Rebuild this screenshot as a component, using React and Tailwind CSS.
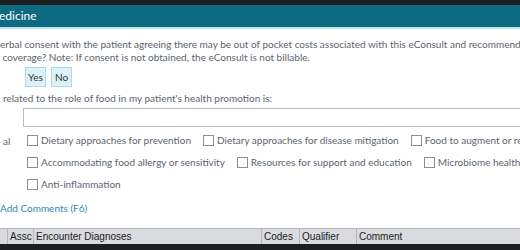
import React from 'react'

const ROWS = [
  ['Dietary approaches for prevention', 'Dietary approaches for disease mitigation', 'Food to augment or reduce medication'],
  ['Accommodating food allergy or sensitivity', 'Resources for support and education', 'Microbiome health'],
  ['Anti-inflammation'],
]

function Check({ label }) {
  return (
    <label className="flex items-center gap-[3px] shrink-0">
      <span className="w-[11px] h-[11px] border border-[#8a8f94] bg-white" />
      <span>{label}</span>
    </label>
  )
}

export default function App() {
  return (
    <div
      className="w-[520px] h-[250px] overflow-hidden bg-white flex flex-col text-[#5b6570] whitespace-nowrap"
      style={{ fontFamily: 'Lato, "Open Sans", sans-serif' }}
    >
      <div className="h-[5px] bg-[#1c1f22] shrink-0" />
      <div className="h-[22px] bg-[#0d6a80] text-white text-[12px] flex items-center shrink-0">
        <span className="-ml-[1px]">edicine</span>
      </div>
      <div className="h-[2px] bg-[#bfe6f1] shrink-0" />

      <div className="text-[10px] leading-[13px] pt-[9px] overflow-hidden">
        <div>erbal consent with the patient agreeing there may be out of pocket costs associated with this eConsult and recommendations</div>
        <div>&nbsp;coverage? Note: If consent is not obtained, the eConsult is not billable.</div>
      </div>

      <div className="flex gap-[5px] pl-[25px] pt-[3px] text-[10px] text-[#333]">
        <span className="h-[20px] w-[21px] flex items-center justify-center bg-[#dcf2f8] border border-[#a9dbe8]">Yes</span>
        <span className="h-[20px] w-[21px] flex items-center justify-center bg-[#dcf2f8] border border-[#a9dbe8]">No</span>
      </div>

      <div className="text-[10px] pl-[3px] pt-[5px] leading-[13px]">
        related to the role of food in my patient's health promotion is:
      </div>

      <div className="pl-[23px] pt-[3px]">
        <div className="h-[19px] w-[520px] border border-[#b8bcc0] bg-white" />
      </div>

      <div className="flex text-[10px] pt-[7px]">
        <div className="w-[27px] pl-[3px] shrink-0">al</div>
        <div className="flex flex-col gap-[9px]">
          {ROWS.map((row, i) => (
            <div key={i} className="flex gap-[12px] leading-[13px]">
              {row.map((l) => (
                <Check key={l} label={l} />
              ))}
            </div>
          ))}
        </div>
      </div>

      <div className="text-[10px] text-[#2f86b8] pt-[11px] leading-[13px]">Add Comments (F6)</div>

      <div className="flex-1" />

      <div
        className="flex h-[16px] bg-[#d9dbde] border-t border-[#b4b7ba] text-[10px] text-[#222] shrink-0"
        style={{ fontFamily: '"Liberation Sans", Arial, sans-serif' }}
      >
        <div className="w-[8px] border-r border-[#b4b7ba]" />
        <div className="w-[26px] px-[2px] border-r border-[#b4b7ba] flex items-center">Assc</div>
        <div className="w-[228px] px-[2px] border-r border-[#b4b7ba] flex items-center">Encounter Diagnoses</div>
        <div className="w-[38px] px-[2px] border-r border-[#b4b7ba] flex items-center">Codes</div>
        <div className="w-[57px] px-[2px] border-r border-[#b4b7ba] flex items-center">Qualifier</div>
        <div className="flex-1 px-[2px] flex items-center">Comment</div>
      </div>
      <div className="h-[6px] bg-[#1c1f22] shrink-0" />
    </div>
  )
}
